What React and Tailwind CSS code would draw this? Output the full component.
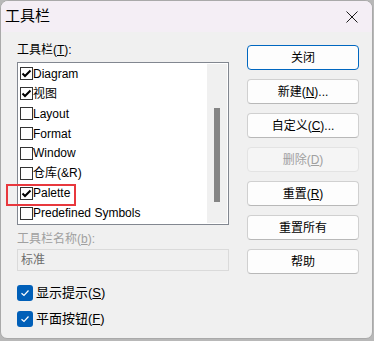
import React from 'react';

const FONT = { fontFamily: '"Liberation Sans", "Noto Sans CJK SC", sans-serif' };

const items = [
  { label: 'Diagram', checked: true },
  { label: '视图', checked: true },
  { label: 'Layout', checked: false },
  { label: 'Format', checked: false },
  { label: 'Window', checked: false },
  { label: '仓库(&R)', checked: false },
  { label: 'Palette', checked: true },
  { label: 'Predefined Symbols', checked: false },
];

const ListCheck = ({ checked }) => (
  <span className="w-[13px] h-[13px] border border-[#333333] bg-white flex items-center justify-center shrink-0">
    {checked && (
      <svg width="11" height="11" viewBox="0 0 11 11">
        <path d="M1.5 5.5 L4 8 L9.5 2.5" fill="none" stroke="#000" strokeWidth="2" />
      </svg>
    )}
  </span>
);

const BlueCheck = () => (
  <span className="w-4 h-4 rounded-[3px] bg-[#005fb8] flex items-center justify-center shrink-0">
    <svg width="10" height="10" viewBox="0 0 10 10">
      <path d="M1.5 5.2 L4 7.5 L8.5 2.5" fill="none" stroke="#fff" strokeWidth="1.2" />
    </svg>
  </span>
);

const Button = ({ children, primary, disabled }) => (
  <div
    className={
      'h-[25px] rounded-[4px] border flex items-center justify-center text-[12px] ' +
      (primary
        ? 'border-[#0067c0] bg-[#fdfdfd] text-black'
        : disabled
        ? 'border-[#e3e3e3] bg-[#f5f5f5] text-[#a0a0a0]'
        : 'border-[#d0d0d0] border-b-[#b8b8b8] bg-[#fdfdfd] text-black')
    }
  >
    {children}
  </div>
);

export default function App() {
  return (
    <div className="w-[374px] h-[341px] bg-[#b8b8b8]" style={FONT}>
      <div className="w-[373px] h-[339px] rounded-t-[8px] rounded-b-[7px] border border-[#a9a9a9] bg-[#f0f0f0] overflow-hidden">
        <div className="h-[31px] bg-[#f4eef5] flex items-center justify-between pl-[4px] pr-[14px]">
          <span className="text-[15px] text-black">工具栏</span>
          <svg width="12" height="12" viewBox="0 0 12 12">
            <path d="M0.5 0.5 L11.5 11.5 M11.5 0.5 L0.5 11.5" stroke="#1a1a1a" strokeWidth="1" />
          </svg>
        </div>
        <div className="flex pl-[16px] pt-[10px]">
          <div className="w-[212px] flex flex-col">
            <div className="h-4 leading-4 text-[12px] text-black">
              工具栏(<span className="underline">T</span>):
            </div>
            <div className="relative mt-[4px] h-[163px] border border-[#828790] bg-white p-[1px] flex">
              <div className="flex-1 flex flex-col pl-[1px]">
                {items.map((it) => (
                  <div key={it.label} className="h-5 flex items-center">
                    <ListCheck checked={it.checked} />
                    <span className="text-[12px] text-black whitespace-nowrap">{it.label}</span>
                  </div>
                ))}
              </div>
              <div className="w-[20px] bg-[#f0f0f0] pt-[44px] flex justify-center">
                <div className="w-[6px] h-[94px] bg-[#858585]" />
              </div>
              <div className="absolute left-[-12px] top-[121px] w-[70px] h-[22px] border-2 border-[#e8383d]" />
            </div>
            <div className="mt-[6px] h-4 leading-4 text-[12px] text-[#a0a0a0]">
              工具栏名称(<span className="underline">b</span>):
            </div>
            <div className="mt-[2px] h-[22px] border border-[#dadada] flex items-center pl-[3px] text-[12px] text-[#6d6d6d]">
              标准
            </div>
            <div className="mt-[14px] flex flex-col gap-[10px]">
              <div className="flex items-center gap-[3px] h-4">
                <BlueCheck />
                <span className="text-[13px] text-black">
                  显示提示(<span className="underline">S</span>)
                </span>
              </div>
              <div className="flex items-center gap-[3px] h-4">
                <BlueCheck />
                <span className="text-[13px] text-black">
                  平面按钮(<span className="underline">F</span>)
                </span>
              </div>
            </div>
          </div>
          <div className="ml-[18px] mt-[3px] w-[112px] flex flex-col gap-[9px]">
            <Button primary>关闭</Button>
            <Button>
              新建(<span className="underline">N</span>)...
            </Button>
            <Button>
              自定义(<span className="underline">C</span>)...
            </Button>
            <Button disabled>
              删除(<span className="underline">D</span>)
            </Button>
            <Button>
              重置(<span className="underline">R</span>)
            </Button>
            <Button>重置所有</Button>
            <Button>帮助</Button>
          </div>
        </div>
      </div>
    </div>
  );
}
